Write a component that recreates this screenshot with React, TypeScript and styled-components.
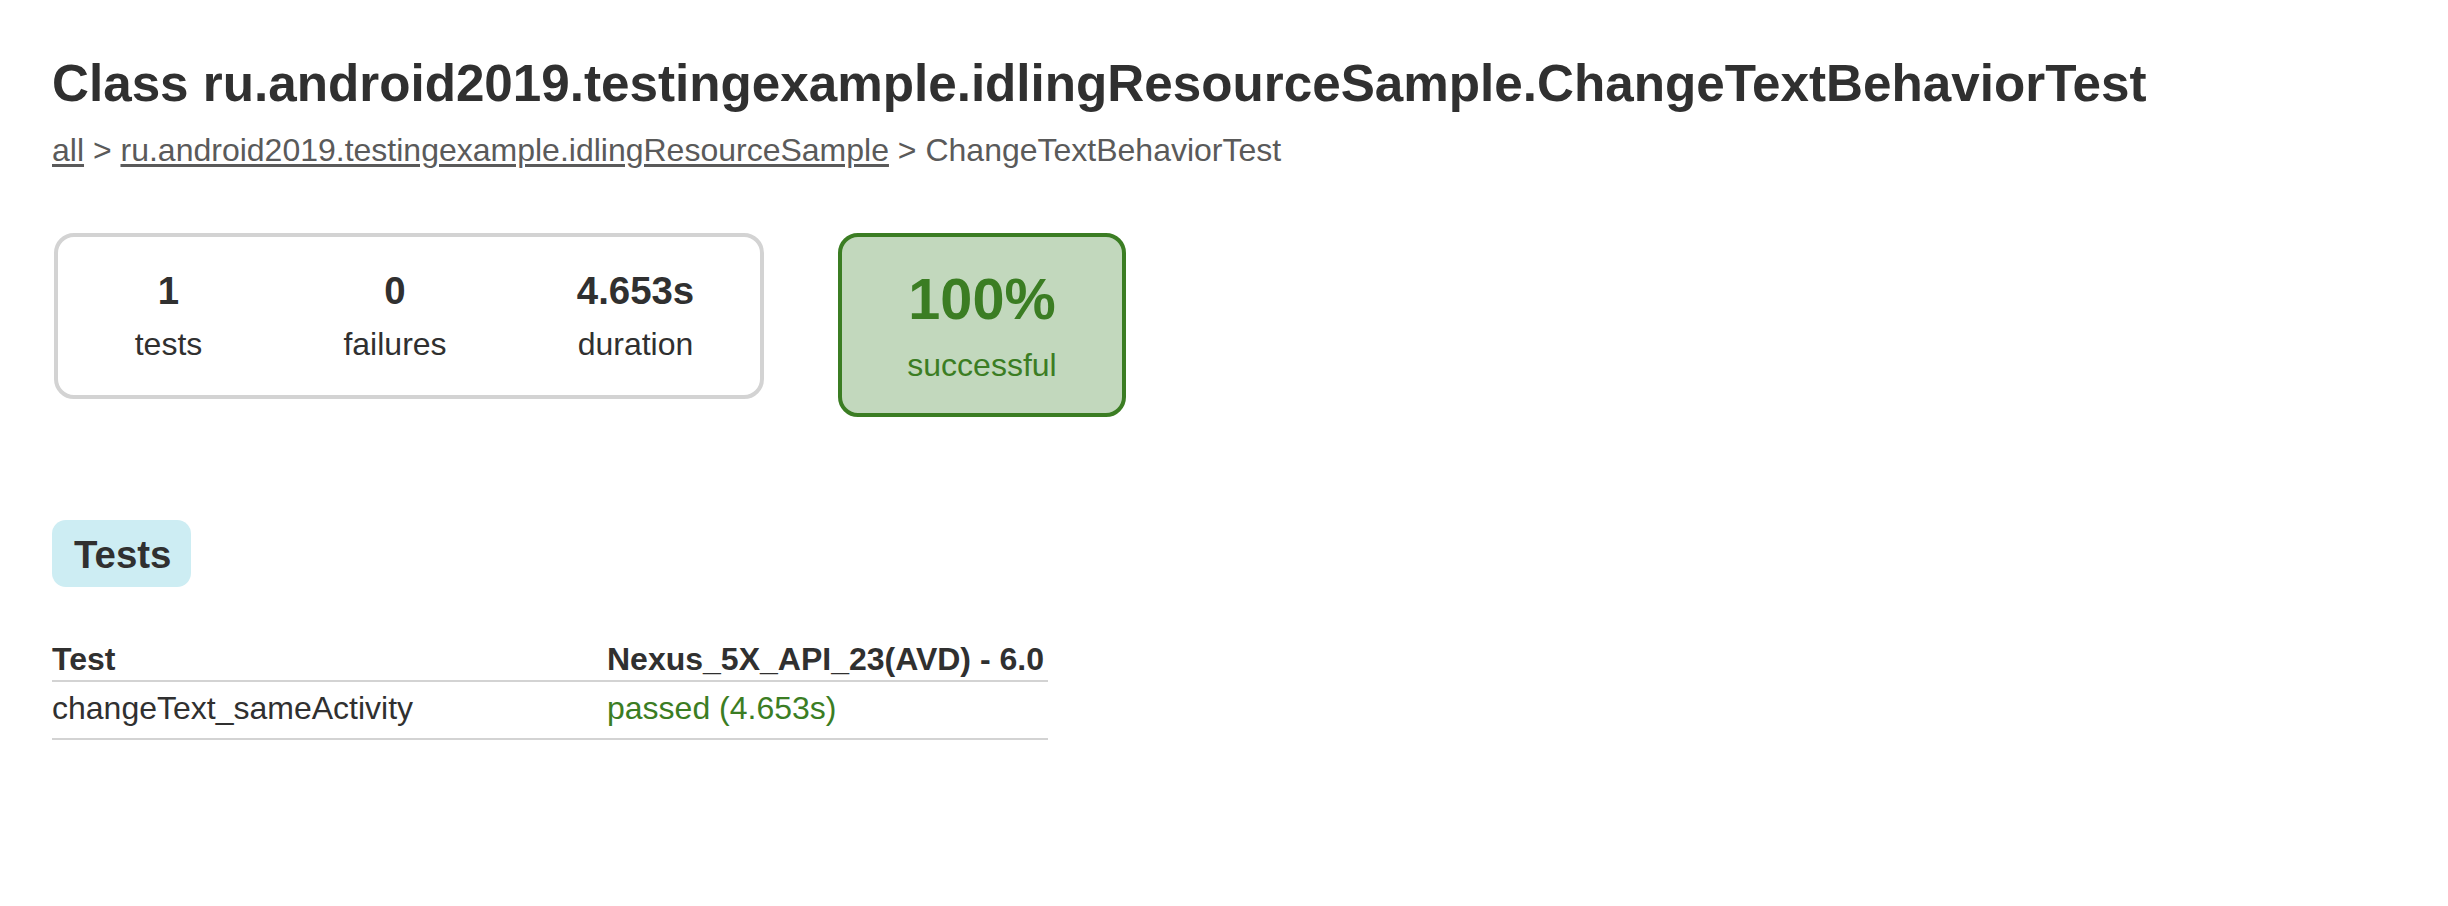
import React from 'react';
import styled, { createGlobalStyle } from 'styled-components';

const GREEN = '#3b7d23';

const GlobalStyle = createGlobalStyle`
    body {
        margin: 0;
        padding: 0;
        background: #ffffff;
        color: #303030;
        font-family: "Liberation Sans", Helvetica, Arial, sans-serif;
        font-size: 32px;
    }
`

const Page = styled.div`
    padding: 54px 0 60px 52px;
`

const Title = styled.h1`
    margin: 0;
    font-size: 51.2px;
    line-height: 60px;
    font-weight: bold;
    white-space: nowrap;
`

const Breadcrumb = styled.div`
    margin-top: 18px;
    font-size: 32px;
    line-height: 37px;
    color: #5a5a5a;
    white-space: nowrap;
`

const Crumb = styled.a`
    color: inherit;
    text-decoration: underline;
    text-underline-offset: 3px;
`

const SummaryRow = styled.div`
    display: flex;
    align-items: flex-start;
    gap: 74px;
    margin: 64px 0 0 2px;
`

const SummaryGroup = styled.div`
    display: flex;
    border: 4px solid #d3d3d3;
    border-radius: 20px;
`

const InfoBox = styled.div<{ $w: number }>`
    width: ${p => p.$w}px;
    padding: 32px 0 33px;
    text-align: center;
`

const Counter = styled.div`
    font-size: 38.4px;
    font-weight: bold;
    line-height: 44px;
    margin-bottom: 13px;
`

const Label = styled.p`
    margin: 0;
    font-size: 32px;
    line-height: 36px;
`

const SuccessRate = styled.div`
    width: 280px;
    padding: 29px 0 30px;
    text-align: center;
    color: ${GREEN};
    background: #c2d8bd;
    border: 4px solid ${GREEN};
    border-radius: 20px;
`

const Percent = styled.div`
    font-size: 57.6px;
    font-weight: bold;
    line-height: 66px;
    margin-bottom: 15px;
`

const TabLinks = styled.div`
    display: flex;
    margin-top: 103px;
`

const Tab = styled.div<{ $selected?: boolean }>`
    padding: 12px 20px 10px 22px;
    border-radius: 14px;
    font-size: 38.4px;
    font-weight: bold;
    line-height: 45px;
    background: ${p => (p.$selected ? '#cdedf3' : '#f0f0f0')};
`

const Table = styled.table`
    margin-top: 54px;
    width: 996px;
    border-collapse: collapse;
    font-size: 32px;
    line-height: 37px;
`

const Th = styled.th<{ $w?: number }>`
    text-align: left;
    font-weight: bold;
    padding: 0 0 2px;
    white-space: nowrap;
    border-bottom: 2px solid #d3d3d3;
    ${p => (p.$w ? `width: ${p.$w}px;` : '')}
`

const Td = styled.td<{ $success?: boolean }>`
    padding: 8px 0 11px;
    white-space: nowrap;
    border-bottom: 2px solid #d3d3d3;
    color: ${p => (p.$success ? GREEN : 'inherit')};
`

const counters = [
    { value: '1', label: 'tests', w: 221 },
    { value: '0', label: 'failures', w: 232 },
    { value: '4.653s', label: 'duration', w: 249 },
]

export default function App() {
    return (
        <>
            <GlobalStyle />
            <Page>
                <Title>Class ru.android2019.testingexample.idlingResourceSample.ChangeTextBehaviorTest</Title>
                <Breadcrumb>
                    <Crumb href="#">all</Crumb> &gt; <Crumb href="#">ru.android2019.testingexample.idlingResourceSample</Crumb> &gt; ChangeTextBehaviorTest
                </Breadcrumb>

                <SummaryRow>
                    <SummaryGroup>
                        {counters.map(c => (
                            <InfoBox key={c.label} $w={c.w}>
                                <Counter>{c.value}</Counter>
                                <Label>{c.label}</Label>
                            </InfoBox>
                        ))}
                    </SummaryGroup>
                    <SuccessRate>
                        <Percent>100%</Percent>
                        <Label>successful</Label>
                    </SuccessRate>
                </SummaryRow>

                <TabLinks>
                    <Tab $selected>Tests</Tab>
                </TabLinks>

                <Table>
                    <thead>
                        <tr>
                            <Th $w={555}>Test</Th>
                            <Th>Nexus_5X_API_23(AVD) - 6.0</Th>
                        </tr>
                    </thead>
                    <tbody>
                        <tr>
                            <Td>changeText_sameActivity</Td>
                            <Td $success>passed (4.653s)</Td>
                        </tr>
                    </tbody>
                </Table>
            </Page>
        </>
    );
}
